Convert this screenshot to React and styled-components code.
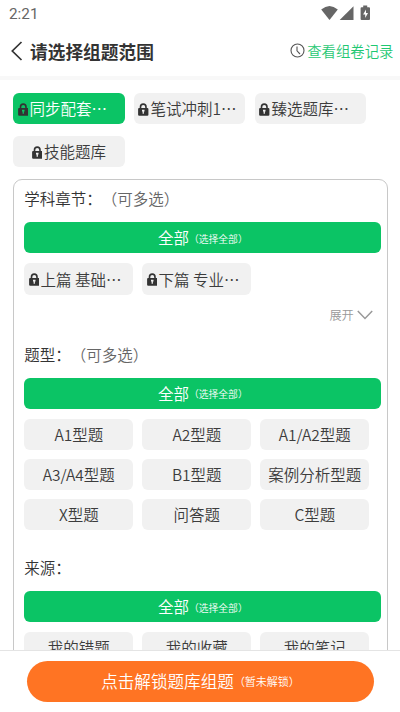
import React from "react";
import styled, { createGlobalStyle } from "styled-components";

const Global = createGlobalStyle`
  * { box-sizing: border-box; }
  html, body { margin: 0; padding: 0; background: #fff; overflow: hidden; }
  body { font-family: "Noto Sans CJK SC", sans-serif; font-weight: 350; color: #333; }
  button { font: inherit; border: 0; padding: 0; background: none; color: inherit; }
`;

const Screen = styled.div`
  display: flex;
  flex-direction: column;
  width: 400px;
  height: 712px;
  overflow: hidden;
  background: #fff;
`;

const StatusBar = styled.div`
  flex: none;
  display: flex;
  justify-content: space-between;
  height: 27px;
  padding: 0 29.5px 0 9px;
  font: 15.3px/28px Roboto, sans-serif;
  color: #666;
`;

const StatusIcons = styled.svg`
  width: 50px;
  height: 17px;
  margin-top: 5px;
`;

const Header = styled.header`
  flex: none;
  display: flex;
  align-items: center;
  height: 53px;
  padding: 0 6.5px 2px 11px;
  border-bottom: 4.5px solid #f8f8f8;
`;

const BackIcon = styled.svg`
  width: 12px;
  height: 20px;
`;

const Title = styled.h1`
  flex: 1;
  margin: 0 0 0 7px;
  font-size: 17.7px;
  line-height: 26px;
  font-weight: 700;
`;

const RecordLink = styled.button`
  display: flex;
  align-items: center;
  gap: 2px;
  font-size: 14.4px;
  line-height: 22px;
  color: #1fc873;
`;

const ClockIcon = styled.svg`
  width: 15px;
  height: 15px;
`;

const Content = styled.main`
  flex: 1;
  min-height: 0;
  overflow: hidden;
  padding: 13.3px 12.5px 0 13.3px;
`;

const Banks = styled.div`
  display: grid;
  grid-template-columns: repeat(3, 111.3px);
  gap: 11.8px 9.6px;
`;

const ChipBox = styled.button`
  display: flex;
  align-items: center;
  justify-content: ${(p) => (p.$clipped ? "flex-start" : "center")};
  gap: 1.5px;
  height: 31.2px;
  padding: 0 4.3px;
  border-radius: 6px;
  font-size: 15.5px;
  line-height: 30px;
  white-space: nowrap;
  background: ${(p) => (p.$active ? "#0bc465" : "#f1f1f1")};
  color: ${(p) => (p.$active ? "#fff" : "#3c3c3c")};
`;

const ChipText = styled.span`
  height: 31px;
`;

const LockIcon = styled.svg`
  flex: none;
  width: 10.5px;
  height: 13px;
  margin-top: 1px;
`;

const Panel = styled.section`
  height: 620px;
  margin-top: 12px;
  padding: 0 5.2px 0 10px;
  border: 1.2px solid #c8c8c8;
  border-radius: 9px;
`;

const Label = styled.h2`
  display: flex;
  margin: 0;
  padding-top: ${(p) => p.$top}px;
  font-size: 15.5px;
  line-height: 24px;
  font-weight: inherit;
`;

const Hint = styled.span`
  color: #666;
`;

const AllButton = styled.button`
  display: flex;
  align-items: center;
  justify-content: center;
  width: 100%;
  height: 31.3px;
  margin-top: ${(p) => p.$top}px;
  padding-bottom: 1px;
  border-radius: 6px;
  background: #0bc465;
  color: #fff;
  font-size: 15.5px;
  line-height: 30px;
`;

const Small = styled.span`
  font-size: ${(p) => p.$size}px;
  padding-top: ${(p) => p.$drop || 0}px;
`;

const Options = styled.div`
  display: grid;
  grid-template-columns: repeat(3, 109px);
  gap: 8.8px 9px;
  margin-top: 10px;
`;

const Expand = styled.button`
  display: flex;
  align-items: center;
  gap: 3.5px;
  margin: 10px 8px 0 auto;
  font-size: 12.2px;
  line-height: 20px;
  color: #999;
`;

const ChevronIcon = styled.svg`
  width: 16px;
  height: 10px;
`;

const Footer = styled.footer`
  flex: none;
  height: 62px;
  padding: 10px 26px 0 27px;
  border-top: 1px solid #e4e4e4;
  background: #fff;
`;

const UnlockButton = styled.button`
  display: flex;
  align-items: center;
  justify-content: center;
  width: 100%;
  height: 41px;
  padding-bottom: 1px;
  border-radius: 21px;
  background: #ff7423;
  color: #fff;
  font-size: 16.6px;
  line-height: 40px;
`;

function Chip({ locked, active, clipped, children }) {
  return (
    <ChipBox $active={active} $clipped={clipped}>
      {locked && (
        <LockIcon viewBox="0 0 10.5 13">
          <path d="M2.5 6V3.9a2.75 2.75 0 0 1 5.5 0V6" fill="none" stroke="#333" strokeWidth="1.6" />
          <rect x="0.1" y="4.9" width="10.3" height="7.9" rx="1.1" fill="#333" />
          <path d="M4 6.8h2.5v1.7h-.6v2.2h-1.3v-2.2H4z" fill={active ? "#0bc465" : "#f1f1f1"} />
        </LockIcon>
      )}
      <ChipText>{children}</ChipText>
    </ChipBox>
  );
}

function SelectAll({ top }) {
  return (
    <AllButton $top={top}>
      全部<Small $size={9.8} $drop={3}>（选择全部）</Small>
    </AllButton>
  );
}

const TYPES = ["A1型题", "A2型题", "A1/A2型题", "A3/A4型题", "B1型题", "案例分析型题", "X型题", "问答题", "C型题"];
const SOURCES = ["我的错题", "我的收藏", "我的笔记"];

export default function App() {
  return (
    <Screen>
      <Global />
      <StatusBar>
        <span>2:21</span>
        <StatusIcons viewBox="0 0 50 17" fill="#666">
          <path d="M0.2 4.6Q8.5-2.8 16.8 4.6L8.5 15z" />
          <path d="M32.5 1.2V15H18.7z" />
          <path d="M42.2 0.6h4v1.7h1.8q1 0 1 1V14q0 1-1 1h-7.4q-1 0-1-1V3.3q0-1 1-1h1.6z" />
          <path d="M45 4.6v3.5h2l-2.8 5V9.5h-2.1z" fill="#fff" />
        </StatusIcons>
      </StatusBar>
      <Header>
        <BackIcon viewBox="0 0 12 20" fill="none" stroke="#333" strokeWidth="1.7">
          <path d="M10.5 1L1.3 10l9.2 9" />
        </BackIcon>
        <Title>请选择组题范围</Title>
        <RecordLink>
          <ClockIcon viewBox="0 0 15 15" fill="none" stroke="#555" strokeWidth="1.1">
            <circle cx="7.5" cy="7.5" r="6.5" />
            <path d="M7 3.5v4.3l3 3.2" />
          </ClockIcon>
          查看组卷记录
        </RecordLink>
      </Header>
      <Content>
        <Banks>
          <Chip locked active clipped>同步配套…</Chip>
          <Chip locked clipped>笔试冲刺1…</Chip>
          <Chip locked clipped>臻选题库…</Chip>
          <Chip locked>技能题库</Chip>
        </Banks>
        <Panel>
          <Label $top={5.7}>学科章节：<Hint>（可多选）</Hint></Label>
          <SelectAll top={12} />
          <Options>
            <Chip locked clipped>上篇 基础…</Chip>
            <Chip locked clipped>下篇 专业…</Chip>
          </Options>
          <Expand>
            展开
            <ChevronIcon viewBox="0 0 16 10" fill="none" stroke="#999" strokeWidth="1.5">
              <path d="M0.8 1L8 8.5 15.2 1" />
            </ChevronIcon>
          </Expand>
          <Label $top={17.3}>题型：<Hint>（可多选）</Hint></Label>
          <SelectAll top={11.7} />
          <Options>
            {TYPES.map((t) => <Chip key={t}>{t}</Chip>)}
          </Options>
          <Label $top={25.3}>来源：</Label>
          <SelectAll top={11.6} />
          <Options>
            {SOURCES.map((t) => <Chip key={t}>{t}</Chip>)}
          </Options>
        </Panel>
      </Content>
      <Footer>
        <UnlockButton>
          点击解锁题库组题<Small $size={11}>（暂未解锁）</Small>
        </UnlockButton>
      </Footer>
    </Screen>
  );
}
